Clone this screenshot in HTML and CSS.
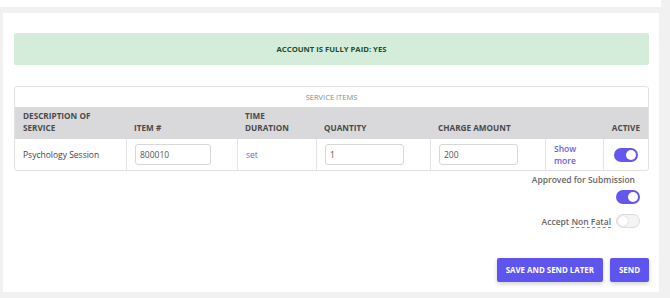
FILE: index.html
```html
<!DOCTYPE html>
<html>
<head>
<meta charset="utf-8">
<link rel="stylesheet" href="styles.css">
</head>
<body>
<div class="page">
  <div class="topstrip"></div>
  <div class="card">
    <div class="alert">ACCOUNT IS FULLY PAID: YES</div>
    <div class="table">
      <div class="caption">SERVICE ITEMS</div>
      <div class="row head">
        <div class="c c1">DESCRIPTION OF SERVICE</div>
        <div class="c c2">ITEM #</div>
        <div class="c c3">TIME DURATION</div>
        <div class="c c4">QUANTITY</div>
        <div class="c c5">CHARGE AMOUNT</div>
        <div class="c c6"></div>
        <div class="c c7 right">ACTIVE</div>
      </div>
      <div class="row body">
        <div class="c c1">Psychology Session</div>
        <div class="c c2"><input class="inp" value="800010"></div>
        <div class="c c3"><a class="link">set</a></div>
        <div class="c c4"><input class="inp" value="1"></div>
        <div class="c c5"><input class="inp" value="200"></div>
        <div class="c c6"><a class="link more">Show more</a></div>
        <div class="c c7 center"><span class="toggle on"></span></div>
      </div>
    </div>
    <div class="options">
      <div class="opt-label">Approved for Submission</div>
      <span class="toggle on"></span>
      <div class="opt-line"><span class="opt-label">Accept <span class="dotted">Non Fatal</span></span><span class="toggle off"></span></div>
    </div>
    <div class="actions">
      <button class="btn">SAVE AND SEND LATER</button>
      <button class="btn">SEND</button>
    </div>
  </div>
</div>
</body>
</html>
```
FILE: styles.css
```css
* { box-sizing: border-box; }
html, body { margin: 0; padding: 0; }
body {
  background: #f1f1f1;
  font-family: "Open Sans", "Liberation Sans", sans-serif;
  width: 670px;
  height: 298px;
  overflow: hidden;
}
.page { width: 661px; }
.topstrip {
  height: 7px;
  background: #fff;
}
.card {
  margin: 6px 0 0 3px;
  width: 656px;
  height: 279px;
  background: #fff;
  padding: 20px 10px 0 11px;
}
.alert {
  height: 32px;
  background: #d4eddb;
  border-radius: 2px;
  color: #1e4d2b;
  font-weight: 700;
  font-size: 7.7px;
  display: flex;
  align-items: center;
  justify-content: center;
}
.table {
  margin-top: 21px;
  border: 1px solid #e2e2e2;
  border-radius: 3px;
}
.caption {
  height: 20px;
  display: flex;
  align-items: center;
  justify-content: center;
  font-size: 7.5px;
  color: #8a8a8a;
}
.row { display: flex; }
.row.head {
  background: #d9d9dc;
  height: 32px;
  font-weight: 700;
  font-size: 8.2px;
  color: #4a4a4a;
}
.row.head .c { display: flex; align-items: flex-end; padding-bottom: 5px; line-height: 12px; }
.row.body { height: 31px; font-size: 8.5px; color: #444; }
.row.body .c { display: flex; align-items: center; border-left: 1px solid #e4e4e4; }
.row.body .c1 { border-left: none; }
.c { padding-left: 8px; }
.c1 { width: 111px; padding-right: 20px; }
.c2 { width: 111px; }
.c3 { width: 79px; padding-right: 20px; }
.c4 { width: 114px; }
.c5 { width: 115px; }
.c6 { width: 58px; }
.c7 { flex: 1; padding-left: 0; }
.row.head .right { justify-content: flex-end; padding-right: 8px; }
.row.body .center { justify-content: center; }
.inp {
  width: 76px;
  height: 21px;
  border: 1px solid #d8d8d8;
  border-radius: 3px;
  font-family: "Open Sans", sans-serif;
  font-size: 8.5px;
  color: #555;
  padding: 0 4px;
  outline: none;
}
.c4 .inp, .c5 .inp { width: 79px; }
.link { color: #6b5cf0; font-size: 8.5px; }
.more { font-weight: 600; line-height: 12px; width: 30px; }
.toggle {
  display: inline-block;
  position: relative;
  width: 24px;
  height: 14px;
  border-radius: 7px;
  background: #6357ee;
}
.toggle::after {
  content: "";
  position: absolute;
  top: 2px;
  right: 2px;
  width: 10px;
  height: 10px;
  border-radius: 50%;
  background: #fff;
}
.toggle.off { background: #f4f4f4; border: 1px solid #dcdcdc; }
.toggle.off::after { left: 1px; top: 1px; right: auto; box-shadow: 0 0 1px rgba(0,0,0,0.3); }
.options {
  margin-top: 2px;
  display: flex;
  flex-direction: column;
  align-items: flex-end;
  padding-right: 9px;
  font-size: 8.5px;
  color: #666;
  font-weight: 600;
}
.options > .opt-label { margin-right: 5px; line-height: 14px; }
.options > .toggle { margin-top: 3px; }
.opt-line { margin-top: 10px; display: flex; align-items: center; gap: 5px; }
.dotted { border-bottom: 1px dashed #888; }
.actions {
  margin-top: 30px;
  display: flex;
  justify-content: flex-end;
  gap: 7px;
}
.btn {
  height: 24px;
  border: none;
  border-radius: 2px;
  background: #5e55ef;
  color: #fff;
  font-family: "Open Sans", sans-serif;
  font-weight: 700;
  font-size: 7.9px;
  padding: 0 9px;
  box-shadow: 0 2px 4px rgba(0,0,0,0.18);
}
```
